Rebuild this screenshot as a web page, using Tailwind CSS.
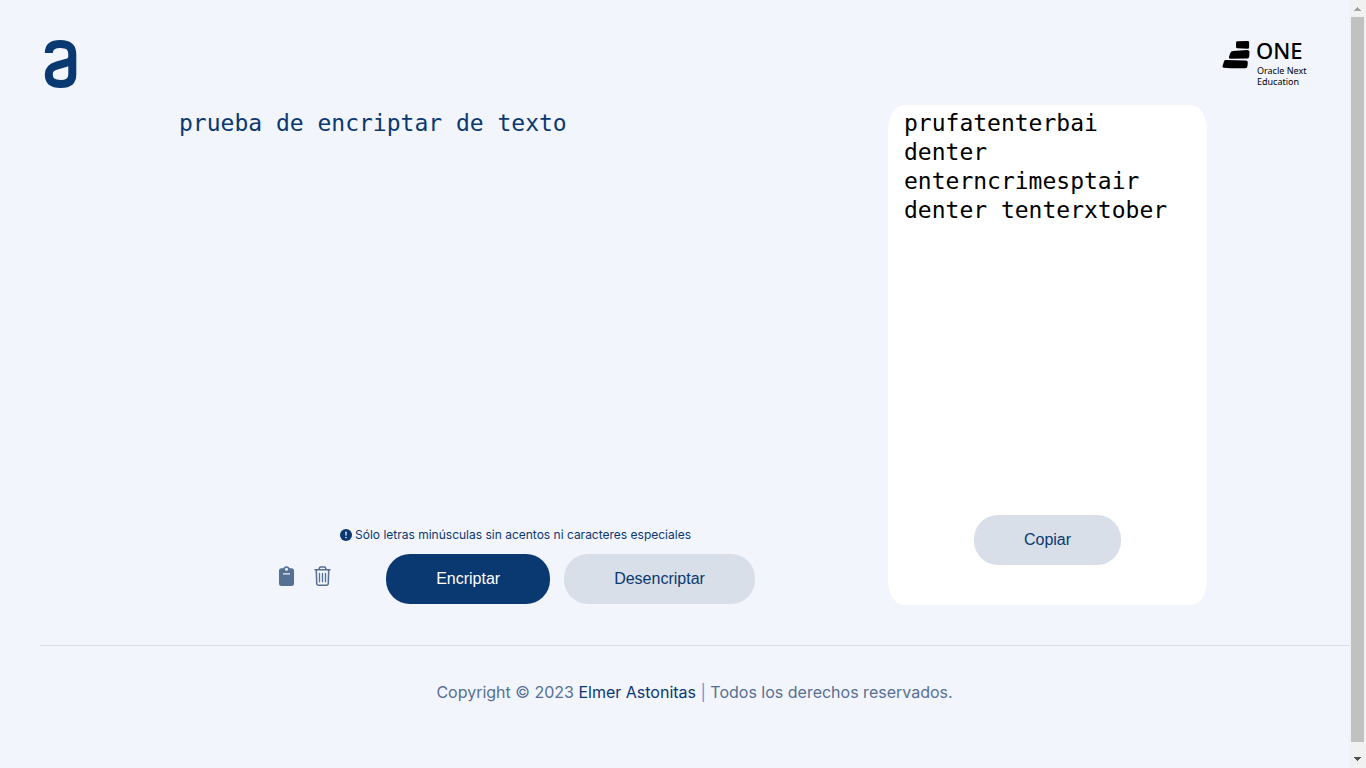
<!DOCTYPE html>
<html lang="es">
<head>
<meta charset="utf-8">
<meta name="viewport" content="width=device-width, initial-scale=1">
<title>Encriptador de texto</title>
<script src="https://cdn.jsdelivr.net/npm/@tailwindcss/browser@4"></script>
</head>
<body class="flex h-screen overflow-hidden bg-[#f3f5fc] font-['Inter',sans-serif] text-[#0a3871]">
<div class="min-w-0 flex-1">
  <header class="flex items-start justify-between pt-10 pr-10 pl-11">
    <a href="#" aria-label="Alura">
      <svg class="h-12 w-[33px]" viewBox="0 0 33 48" fill="none" stroke="#0a3871" stroke-width="8">
        <path d="M4.800 13C4.800 6.500 9.300 4 16.300 4C24.800 4 28.300 7.500 28.300 14.500V34.500C28.300 41 24.300 44 16.800 44C8.800 44 4.800 41 4.800 34.500C4.800 29 7.800 26.800 13.300 25.300L21.300 23.200C25.800 22 28.300 20.500 28.300 15.500"/>
      </svg>
    </a>
    <svg class="h-12 w-[87px] overflow-visible" viewBox="0 0 87 48" fill="#000" role="img" aria-label="Oracle Next Education">
      <path d="M15.200 1.200L25.800 1Q27.100 1 27.100 2.300V7.500Q27.100 8.700 25.800 8.700L15.200 8.200Q13.900 8.100 14 6.800L14.100 2.300Q14.200 1.300 15.200 1.200Z"/>
      <path d="M11 11L24.800 9.900Q27.500 9.900 27.500 12L27.200 16.500Q27 18.500 25.300 18.600L8.500 18.700Q6.400 18.600 7 16.800L8.300 12.900Q9 11.200 11 11Z"/>
      <path d="M3.700 20.100L23.800 20.600Q26 20.700 25.800 22.700L25.500 25.900Q25.300 28 23.300 28.200Q12 28.600 1.800 27.800Q0.200 27.600 0.500 26.200L2 21.300Q2.400 20.100 3.700 20.100Z"/>
      <text x="34" y="19" font-family="Noto Sans, sans-serif" font-size="22" font-weight="500">ONE</text>
      <text x="35" y="34" font-family="Noto Sans, sans-serif" font-size="9">Oracle Next</text>
      <text x="35" y="45" font-family="Noto Sans, sans-serif" font-size="9">Education</text>
    </svg>
  </header>

  <main class="mt-[17px] grid min-h-[500px] grid-cols-[705fr_319fr] gap-5 pr-[142px] pl-[163px]">
    <section class="flex flex-col items-center">
      <textarea aria-label="Texto" spellcheck="false" class="w-full flex-1 resize-none bg-transparent px-4 py-1 font-['DejaVu_Sans_Mono',monospace] text-[23px] leading-[29px] outline-none">prueba de encriptar de texto</textarea>
      <p class="mb-[9px] flex items-center gap-[3px] text-[12px] leading-5">
        <svg class="size-3" viewBox="0 0 12 12"><circle cx="6" cy="6" r="6" fill="#0a3871"/><path d="M5.200 2.800H6.800L6.500 6.700H5.500Z" fill="#f3f5fc"/><circle cx="6" cy="8.500" r=".8" fill="#f3f5fc"/></svg>
        <span>Sólo letras minúsculas sin acentos ni caracteres especiales</span>
      </p>
      <div class="mb-px flex pl-0.5">
        <div class="mr-[54px] flex gap-[18px] pt-3 text-[#567093]">
          <button type="button" aria-label="Pegar" class="h-5">
            <svg class="h-5 w-[18px]" viewBox="0 0 18 20"><path fill="currentColor" fill-rule="evenodd" d="M3.500 2.200H5.200C5.900 1.900 6 .2 8.500 .2S11.100 1.900 11.800 2.200H13.500Q16 2.200 16 4.700V17.500Q16 20 13.500 20H3.500Q1 20 1 17.500V4.700Q1 2.200 3.500 2.200ZM8.500 1.800A1.500 1.500 0 1 0 8.500 4.800A1.500 1.500 0 1 0 8.500 1.800ZM5 7.300V8.600H12V7.300Z"/></svg>
          </button>
          <button type="button" aria-label="Borrar" class="h-5">
            <svg class="h-5 w-[18px]" viewBox="0 0 18 20" fill="none" stroke="currentColor" stroke-width="1.500" stroke-linecap="round"><path d="M1 3.700H16M4.800 3.700L5.500 1.700Q5.800 .9 6.600 .9H10.400Q11.200 .9 11.500 1.700L12.200 3.700M2.300 4L2.700 17.200Q2.800 19.200 4.700 19.200H12.300Q14.200 19.200 14.300 17.200L14.700 4"/><path stroke-width="1.300" d="M5.500 7.500V15.800M8.500 7.500V15.800M11.500 7.500V15.800"/></svg>
          </button>
        </div>
        <button type="button" class="mr-3.5 h-[50px] rounded-3xl bg-[#0a3871] px-[50px] font-['Liberation_Sans',sans-serif] text-base text-white">Encriptar</button>
        <button type="button" class="h-[50px] rounded-3xl bg-[#d8dfe8] px-[50px] font-['Liberation_Sans',sans-serif] text-base">Desencriptar</button>
      </div>
    </section>
    <section class="flex flex-col items-center rounded-[5%] bg-white pb-10">
      <textarea aria-label="Resultado" readonly spellcheck="false" class="w-full flex-1 resize-none bg-transparent px-4 py-1 font-['DejaVu_Sans_Mono',monospace] text-[23px] leading-[29px] text-black outline-none">prufatenterbai denter enterncrimesptair denter tenterxtober</textarea>
      <button type="button" class="h-[50px] rounded-3xl bg-[#d8dfe8] px-[50px] font-['Liberation_Sans',sans-serif] text-base">Copiar</button>
    </section>
  </main>

  <footer class="mt-10 ml-10 border-t border-[#d8dbe5] pt-[34px] text-center text-base text-[#567093]">
    Copyright © 2023 <a href="#" class="text-[#0a3871]">Elmer Astonitas</a> <span class="text-[#5b9bd5]">|</span> Todos los derechos reservados.
  </footer>
</div>
<div class="flex w-[17px] flex-col bg-[#f1f1f1]" aria-hidden="true">
  <svg class="size-[17px]" viewBox="0 0 17 17" shape-rendering="crispEdges"><path d="M8 7H9V8H10V9H11V10H12V11H5V10H6V9H7V8H8Z" fill="#a3a3a3"/></svg>
  <div class="mx-0.5 mb-[9px] flex-1 bg-[#c1c1c1]"></div>
  <svg class="size-[17px]" viewBox="0 0 17 17" shape-rendering="crispEdges"><path d="M5 6H12V7H11V8H10V9H9V10H8V9H7V8H6V7H5Z" fill="#505050"/></svg>
</div>
</body>
</html>
